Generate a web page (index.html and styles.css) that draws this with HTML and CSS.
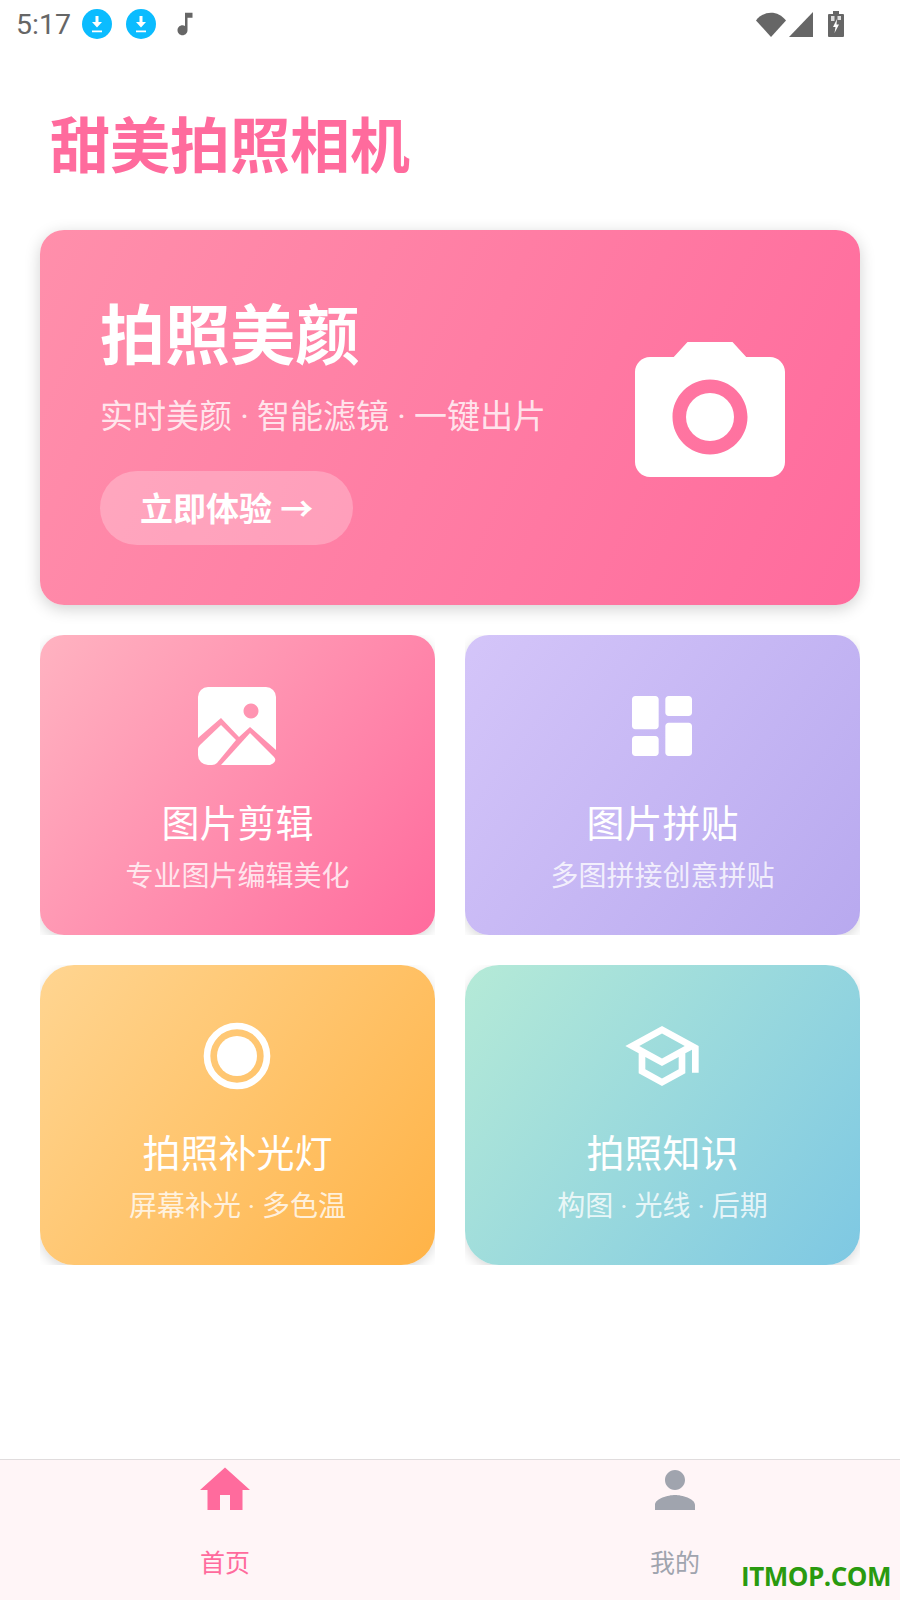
FILE: index.html
```html
<!DOCTYPE html>
<html lang="zh-CN">
<head>
<meta charset="UTF-8">
<meta name="viewport" content="width=device-width, initial-scale=1.0">
<title>甜美拍照相机</title>
<link rel="stylesheet" href="styles.css">
</head>
<body>
<div class="page">
    <div class="status-bar">
        <span class="status-time">5:17</span>
        <svg class="status-dl" viewBox="0 0 30 30"><circle cx="15" cy="15" r="15" fill="#0bbcff"/><path d="M13.5 7h3v6h3.5l-5 5.5-5-5.5h3.5zM10 21.5h10v1.8H10z" fill="#fff"/></svg>
        <svg class="status-dl" viewBox="0 0 30 30"><circle cx="15" cy="15" r="15" fill="#0bbcff"/><path d="M13.5 7h3v6h3.5l-5 5.5-5-5.5h3.5zM10 21.5h10v1.8H10z" fill="#fff"/></svg>
        <svg class="status-note" viewBox="0 0 24 24"><path d="M12 3v10.55c-.59-.34-1.27-.55-2-.55-2.21 0-4 1.79-4 4s1.79 4 4 4 4-1.79 4-4V7h4V3h-6z" fill="#666"/></svg>
        <div class="status-right">
            <svg class="status-wifi" viewBox="0 0 30 25"><path d="M0 8.5C8-2 22-2 30 8.5L15 25z" fill="#666"/></svg>
            <svg class="status-signal" viewBox="0 0 24 25"><path d="M0 25L24 0v25z" fill="#666"/></svg>
            <svg class="status-battery" viewBox="0 0 16 26"><path d="M5 0h6v3h4a1 1 0 0 1 1 1v21a1 1 0 0 1-1 1H1a1 1 0 0 1-1-1V4a1 1 0 0 1 1-1h4z" fill="#666"/><path d="M3 5h3.5v5H3zM9.500 5H13v4H9.500z" fill="#ddd"/><path d="M9 8l-4 8h2.500L6.500 22l4.500-8.500H8.500z" fill="#fff"/></svg>
        </div>
    </div>

    <h1 class="app-title">甜美拍照相机</h1>

    <div class="content">
        <div class="hero">
            <div class="hero-text">
                <h2 class="hero-title">拍照美颜</h2>
                <p class="hero-sub">实时美颜 · 智能滤镜 · 一键出片</p>
                <div class="hero-btn">立即体验 →</div>
            </div>
            <svg class="hero-icon" viewBox="0 0 24 24"><path d="M9 2L7.170 4H4c-1.100 0-2 .9-2 2v12c0 1.100.9 2 2 2h16c1.100 0 2-.9 2-2V6c0-1.100-.9-2-2-2h-3.170L15 2H9zm3 15c-2.760 0-5-2.240-5-5s2.240-5 5-5 5 2.240 5 5-2.240 5-5 5z" fill="#fff"/><circle cx="12" cy="12" r="3.200" fill="#fff"/></svg>
        </div>

        <div class="tiles">
            <div class="tile-clip">
                <div class="tile tile-pink">
                    <svg class="tile-icon" viewBox="-1 -1 80 80"><path fill="#fff" fill-rule="evenodd" d="M10 0H68a10 10 0 0 1 10 10V63L52 40 41 50 23 31 0 51V10A10 10 0 0 1 10 0zM53 16.500a7.500 7.500 0 1 0 .01 0z"/><path fill="#fff" d="M23 38L38 53 19 76Q17 78 14 78H10A10 10 0 0 1 0 68V62Q0 60 2 58z"/><path fill="#fff" d="M52 46L76 70Q80 75 72 78H23z"/></svg>
                    <div class="tile-title">图片剪辑</div>
                    <div class="tile-sub">专业图片编辑美化</div>
                </div>
            </div>
            <div class="tile-clip">
                <div class="tile tile-purple">
                    <svg class="tile-icon" viewBox="0 0 24 24"><path fill="#fff" d="M4 13h6c.55 0 1-.45 1-1V4c0-.55-.45-1-1-1H4c-.55 0-1 .45-1 1v8c0 .55.45 1 1 1zm0 8h6c.55 0 1-.45 1-1v-4c0-.55-.45-1-1-1H4c-.55 0-1 .45-1 1v4c0 .55.45 1 1 1zm10 0h6c.55 0 1-.45 1-1v-8c0-.55-.45-1-1-1h-6c-.55 0-1 .45-1 1v8c0 .55.45 1 1 1zM13 4v4c0 .55.45 1 1 1h6c.55 0 1-.45 1-1V4c0-.55-.45-1-1-1h-6c-.55 0-1 .45-1 1z"/></svg>
                    <div class="tile-title">图片拼贴</div>
                    <div class="tile-sub">多图拼接创意拼贴</div>
                </div>
            </div>
            <div class="tile-clip">
                <div class="tile tile-orange">
                    <svg class="tile-icon" viewBox="0 0 24 24"><circle cx="12" cy="12" r="9" fill="none" stroke="#fff" stroke-width="2"/><circle cx="12" cy="12" r="6" fill="#fff"/></svg>
                    <div class="tile-title">拍照补光灯</div>
                    <div class="tile-sub">屏幕补光 · 多色温</div>
                </div>
            </div>
            <div class="tile-clip">
                <div class="tile tile-teal">
                    <svg class="tile-icon" viewBox="0 0 24 24"><path fill="#fff" d="M12 3L1 9l4 2.180v6L12 21l7-3.820v-6l2-1.090V17h2V9L12 3zm6.820 6L12 12.720 5.180 9 12 5.280 18.820 9zM17 15.990l-5 2.730-5-2.730v-3.720L12 15l5-2.730v3.720z"/></svg>
                    <div class="tile-title">拍照知识</div>
                    <div class="tile-sub">构图 · 光线 · 后期</div>
                </div>
            </div>
        </div>
    </div>

    <div class="nav">
        <div class="nav-item active">
            <svg class="nav-icon" viewBox="0 0 24 24"><path d="M10 20v-6h4v6h5v-8h3L12 3 2 12h3v8z"/></svg>
            <span class="nav-label">首页</span>
        </div>
        <div class="nav-item">
            <svg class="nav-icon" viewBox="0 0 24 24"><path d="M12 12c2.210 0 4-1.790 4-4s-1.790-4-4-4-4 1.790-4 4 1.790 4 4 4zm0 2c-2.670 0-8 1.340-8 4v2h16v-2c0-2.660-5.330-4-8-4z"/></svg>
            <span class="nav-label">我的</span>
        </div>
        <span class="watermark">ITMOP.COM</span>
    </div>
</div>
</body>
</html>
```

FILE: styles.css
```css
body {
    margin: 0;
    background: #fff;
    font-family: Roboto, "Noto Sans CJK SC", sans-serif;
}

.page {
    display: flex;
    flex-direction: column;
    height: 1600px;
}

.status-bar {
    display: flex;
    align-items: center;
    height: 48px;
    padding: 0 56px 0 16px;
}

.status-time {
    width: 66px;
    font-size: 28.5px;
    color: #666;
}

.status-dl {
    width: 30px;
    height: 30px;
    margin-right: 14px;
}

.status-note {
    width: 30px;
    height: 30px;
}

.status-right {
    display: flex;
    align-items: center;
    margin-left: auto;
}

.status-wifi {
    width: 30px;
    height: 25px;
    margin-right: 3px;
}

.status-signal {
    width: 24px;
    height: 25px;
    margin-right: 15px;
}

.status-battery {
    width: 16px;
    height: 26px;
}

.app-title {
    margin: 60px 0 42px 50px;
    font-size: 60px;
    line-height: 80px;
    font-weight: 700;
    color: #ff6b9d;
}

.content {
    padding: 0 40px;
}

.hero {
    display: flex;
    justify-content: space-between;
    height: 375px;
    padding: 67px 60px 0;
    box-sizing: border-box;
    border-radius: 24px;
    background: linear-gradient(114.6deg, #ff8fab, #ff6b9d);
    box-shadow: 0 4px 16px rgba(0, 0, 0, 0.18);
    color: #fff;
}

.hero-title {
    margin: 0;
    font-size: 65px;
    line-height: 80px;
    font-weight: 700;
}

.hero-sub {
    margin: 18px 0 0;
    font-size: 33px;
    line-height: 44px;
    color: rgba(255, 255, 255, 0.8);
}

.hero-btn {
    display: inline-block;
    margin-top: 32px;
    padding: 0 40px;
    height: 74px;
    line-height: 78px;
    border-radius: 37px;
    background: rgba(255, 255, 255, 0.25);
    font-size: 33px;
    font-weight: 700;
}

.hero-icon {
    width: 180px;
    height: 180px;
    margin: 30px 0 0;
}

.tiles {
    display: grid;
    grid-template-columns: 395px 395px;
    gap: 30px;
    margin-top: 30px;
}

.tile-clip {
    height: 300px;
    overflow: hidden;
}

.tile {
    height: 300px;
    padding-top: 51px;
    box-sizing: border-box;
    border-radius: 24px;
    box-shadow: 0 4px 12px rgba(0, 0, 0, 0.15);
    text-align: center;
    color: #fff;
}

.tile-pink { background: linear-gradient(127.2deg, #ffb3c1, #ff6b9d); }
.tile-purple { background: linear-gradient(127.2deg, #d4c5f9, #b8a9ef); }
.tile-orange { background: linear-gradient(127.2deg, #ffd591, #ffb347); border-radius: 34px; }
.tile-teal { background: linear-gradient(127.2deg, #b5ead7, #7ec8e3); border-radius: 34px; }

.tile-icon {
    display: block;
    width: 80px;
    height: 80px;
    margin-left: 157px;
}

.tile-title {
    margin-top: 33px;
    font-size: 38px;
    line-height: 50px;
}

.tile-sub {
    margin-top: 10px;
    font-size: 28px;
    line-height: 36px;
    color: rgba(255, 255, 255, 0.8);
}

.nav {
    position: relative;
    display: flex;
    margin-top: auto;
    height: 140px;
    background: #fff5f7;
    border-top: 1px solid #e0dcdd;
}

.nav-item {
    flex: 1;
    display: flex;
    flex-direction: column;
    align-items: center;
    color: #a0a4ae;
    fill: #a0a4ae;
}

.nav-item.active {
    color: #ff6b9d;
    fill: #ff6b9d;
}

.nav-icon {
    width: 60px;
    height: 60px;
}

.nav-label {
    margin-top: 26px;
    font-size: 25px;
    line-height: 36px;
}

/* site stamp over the nav bar */
.watermark {
    position: absolute;
    right: 9px;
    bottom: 9px;
    font-family: "Open Sans", sans-serif;
    font-size: 26px;
    line-height: 30px;
    font-weight: 700;
    letter-spacing: -0.5px;
    color: #2a9a0f;
}
```
